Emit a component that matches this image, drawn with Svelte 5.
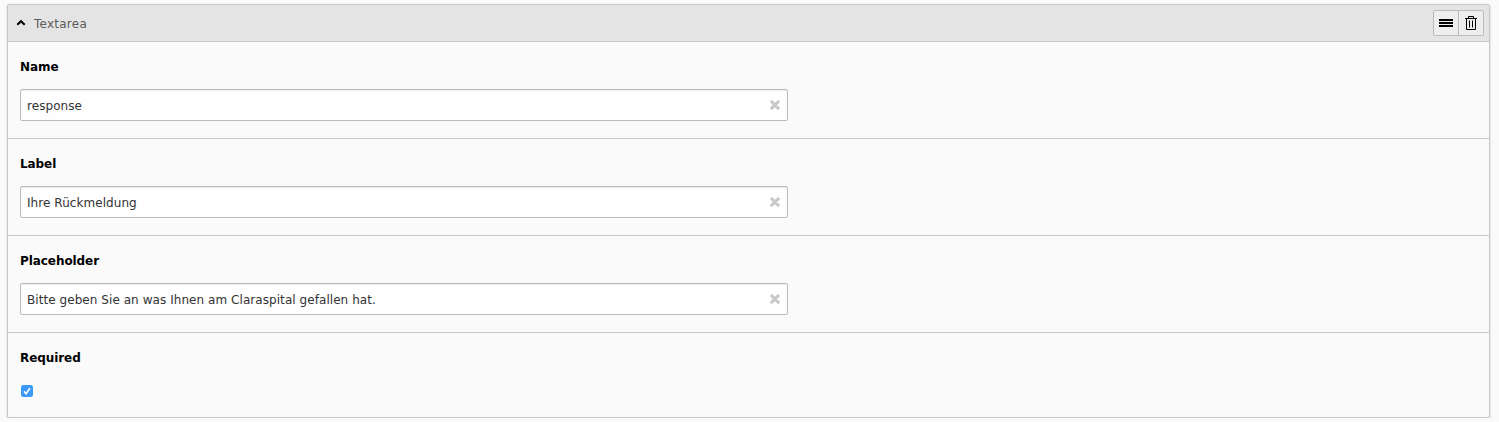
<script>
  let fields = $state([
    { label: 'Name', value: 'response' },
    { label: 'Label', value: 'Ihre Rückmeldung' },
    { label: 'Placeholder', value: 'Bitte geben Sie an was Ihnen am Claraspital gefallen hat.' }
  ]);
</script>

<div class="panel">
  <header>
    <svg class="caret" width="10" height="8" viewBox="0 0 10 8"><path d="M1.3 5.8 5 2.2 8.7 5.8" fill="none" stroke="#000" stroke-width="2" /></svg>
    <span class="title">Textarea</span>
    <div class="buttons">
      <button aria-label="Move">
        <svg width="14" height="8" viewBox="0 0 14 8" shape-rendering="crispEdges"><path d="M0 0h14v2H0zM0 3h14v2H0zM0 6h14v2H0z" /></svg>
      </button>
      <button aria-label="Delete">
        <svg width="12" height="14" viewBox="0 0 12 14" fill="none" stroke="#000"><path d="M0 2.5h12M3.5 2.5v-2h5v2M1.5 3v10.5h9V3M4.5 4.5v7M7.5 4.5v7" /></svg>
      </button>
    </div>
  </header>
  {#each fields as field}
    <section>
      <div class="label">{field.label}</div>
      <div class="input">
        <span>{field.value}</span>
        <svg width="10" height="10" viewBox="0 0 10 10"><path d="M1.8 1.8 8.2 8.2M8.2 1.8 1.8 8.2" stroke="#c8c8c8" stroke-width="3.1" stroke-linecap="round" /></svg>
      </div>
    </section>
  {/each}
  <section class="last">
    <div class="label">Required</div>
    <svg class="check" width="12" height="12" viewBox="0 0 12 12"><rect width="12" height="12" rx="2.5" fill="#3b99fc" /><path d="M3 6.4 5.1 8.7 8.9 3.3" fill="none" stroke="#fff" stroke-width="1.6" /></svg>
  </section>
</div>

<style>
  :global(body) {
    background: #fafafa;
    overflow: hidden;
  }
  .panel {
    box-sizing: border-box;
    width: 1483px;
    height: 414px;
    margin: 4px 0 0 7px;
    border: 1px solid #c8c8c8;
    border-radius: 2px;
    box-shadow: 0 1px 2px rgba(0, 0, 0, 0.25);
    font: 12px/18px Verdana, "DejaVu Sans", sans-serif;
    letter-spacing: 0.06px;
    color: #333;
  }
  header {
    box-sizing: border-box;
    height: 37px;
    display: flex;
    align-items: center;
    padding: 0 5px 0 8px;
    background: #e4e4e4;
    border-bottom: 1px solid #c8c8c8;
  }
  .title {
    margin-left: 8px;
    padding-top: 2px;
    letter-spacing: 0.25px;
    color: #5b5b5b;
  }
  .buttons {
    margin-left: auto;
    display: flex;
  }
  button {
    box-sizing: border-box;
    width: 26px;
    height: 26px;
    padding: 0;
    display: flex;
    align-items: center;
    justify-content: center;
    background: #eee;
    border: 1px solid #bbb;
    border-radius: 2px 0 0 2px;
  }
  button + button {
    margin-left: -1px;
    border-radius: 0 2px 2px 0;
  }
  section {
    box-sizing: border-box;
    height: 97px;
    padding: 16px 12px 0;
    border-bottom: 1px solid #c8c8c8;
  }
  .last {
    height: 84px;
    border: 0;
  }
  .label {
    font-weight: bold;
    letter-spacing: -0.07px;
    color: #000;
    margin-bottom: 13px;
  }
  .input {
    box-sizing: border-box;
    width: 768px;
    height: 32px;
    display: flex;
    align-items: center;
    justify-content: space-between;
    padding: 0 7px 0 6px;
    border: 1px solid #bbb;
    border-radius: 2px;
    background: #fefefe;
    box-shadow: inset 0 1px 1px rgba(0, 0, 0, 0.075);
  }
  .input span {
    padding-top: 2px;
  }
  .input svg {
    margin-bottom: 1px;
  }
  .check {
    display: block;
    margin: 18px 0 0 1px;
  }
</style>
